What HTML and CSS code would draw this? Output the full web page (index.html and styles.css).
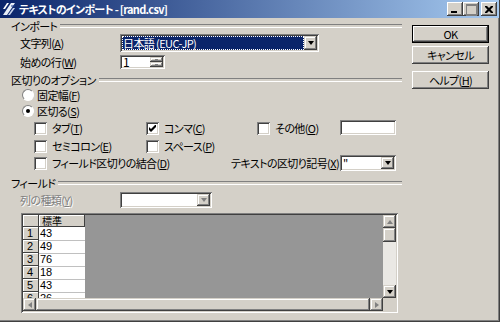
FILE: index.html
```html
<!DOCTYPE html>
<html lang="ja">
<head>
  <meta charset="UTF-8">
  <title>テキストのインポート</title>
  <link rel="stylesheet" href="styles.css">
</head>
<body>
<div class="window">
  <div class="titlebar">
    <svg class="app-icon" width="14" height="14" viewBox="0 0 14 14">
      <path d="M1 13 L9 1 L13 1 L5 13 Z" fill="#e8eef8"/>
      <path d="M1 7 L5 1 L7 1 L3 7 Z" fill="#ffffff"/>
      <path d="M6 13 L11 6 L13 6 L8 13 Z" fill="#c8d4ec"/>
      <path d="M9 4 L13 4" stroke="#1c3c8c" stroke-width="1"/>
    </svg>
    <span class="title">テキストのインポート - [rand.csv]</span>
    <div class="caption-buttons">
      <span class="cap-btn cap-min"></span>
      <span class="cap-btn cap-max"></span>
      <span class="cap-btn cap-close">
        <svg width="8" height="7" viewBox="0 0 8 7"><path d="M0 0h2l2 2 2-2h2v1l-2.5 2.5L8 6v1H6L4 5 2 7H0V6l2.5-2.5L0 1z" fill="#000"/></svg>
      </span>
    </div>
  </div>

  <div class="content">
    <div class="main">
      <div class="group-title"><span>インポート</span></div>

      <div class="row row-charset">
        <span class="field-label">文字列(<u>A</u>)</span>
        <div class="combo combo-charset sunken">
          <span class="combo-value selected">日本語 (EUC-JP)</span>
          <span class="drop-btn raised"><i class="arrow-down"></i></span>
        </div>
      </div>

      <div class="row row-start">
        <span class="field-label">始めの行(<u>W</u>)</span>
        <div class="spin sunken">
          <span class="spin-value">1</span>
          <span class="spin-btns">
            <span class="spin-btn raised"><i class="mini-up"></i></span>
            <span class="spin-btn raised"><i class="mini-down"></i></span>
          </span>
        </div>
      </div>

      <div class="group-title group-options"><span>区切りのオプション</span></div>

      <div class="radio-row radio-first">
        <span class="radio"></span>
        <span>固定幅(<u>F</u>)</span>
      </div>
      <div class="radio-row">
        <span class="radio checked"></span>
        <span>区切る(<u>S</u>)</span>
      </div>

      <div class="check-grid check-row-1">
        <div class="check-item"><span class="checkbox"></span>タブ(<u>T</u>)</div>
        <div class="check-item"><span class="checkbox checked">
          <svg width="7" height="7" viewBox="0 0 7 7"><path d="M0 2v3l2 2 5-5V-1L2 4z" fill="#000"/></svg>
        </span>コンマ(<u>C</u>)</div>
        <div class="check-item"><span class="checkbox"></span>その他(<u>O</u>)</div>
        <div class="textbox sunken"></div>
      </div>

      <div class="check-grid check-row-2">
        <div class="check-item"><span class="checkbox"></span>セミコロン(<u>E</u>)</div>
        <div class="check-item"><span class="checkbox"></span>スペース(<u>P</u>)</div>
      </div>

      <div class="check-row-3">
        <div class="check-item"><span class="checkbox"></span>フィールド区切りの結合(<u>D</u>)</div>
        <span class="quote-label">テキストの区切り記号(<u>X</u>)</span>
        <div class="combo combo-quote sunken">
          <span class="combo-value">"</span>
          <span class="drop-btn raised"><i class="arrow-down"></i></span>
        </div>
      </div>

      <div class="group-title group-fields"><span>フィールド</span></div>

      <div class="row row-coltype">
        <span class="field-label disabled">列の種類(<u>Y</u>)</span>
        <div class="combo combo-type sunken">
          <span class="combo-value"></span>
          <span class="drop-btn raised"><i class="arrow-down gray"></i></span>
        </div>
      </div>

      <div class="grid-box sunken">
        <div class="grid-area">
          <table class="data-grid">
            <tr><th class="corner"></th><th class="col-head">標準</th></tr>
            <tr><th class="row-head">1</th><td>43</td></tr>
            <tr><th class="row-head">2</th><td>49</td></tr>
            <tr><th class="row-head">3</th><td>76</td></tr>
            <tr><th class="row-head">4</th><td>18</td></tr>
            <tr><th class="row-head">5</th><td>43</td></tr>
            <tr><th class="row-head">6</th><td>26</td></tr>
          </table>
        </div>
        <div class="vscroll">
          <span class="sb-btn raised"><i class="arrow-up gray"></i></span>
          <span class="sb-thumb raised"></span>
          <span class="sb-track"></span>
          <span class="sb-btn raised"><i class="arrow-down"></i></span>
        </div>
        <div class="hscroll">
          <span class="sb-btn raised"><i class="arrow-left gray"></i></span>
          <span class="sb-thumb-h raised"></span>
          <span class="sb-btn raised"><i class="arrow-right gray"></i></span>
        </div>
        <div class="sb-corner"></div>
      </div>
    </div>

    <div class="side">
      <button class="btn btn-default">OK</button>
      <button class="btn">キャンセル</button>
      <button class="btn btn-help">ヘルプ(<u>H</u>)</button>
    </div>
  </div>
</div>
</body>
</html>
```

FILE: styles.css
```css
* {
  box-sizing: border-box;
}

body {
  margin: 0;
  background: #d4d0c8;
  font-family: "Noto Sans CJK JP", "Liberation Sans", sans-serif;
  font-size: 11px;
  letter-spacing: -0.6px;
  font-feature-settings: "palt";
  color: #000;
}

u {
  text-decoration: underline;
  text-underline-offset: 1px;
}

.window {
  width: 500px;
  height: 322px;
  background: #d4d0c8;
  border-right: 1px solid #404040;
  border-bottom: 1px solid #404040;
  box-shadow: inset -1px -1px #808080;
}

/* 3D borders, Windows 2000 style */
.raised {
  background: #d4d0c8;
  box-shadow: inset -1px -1px #404040, inset 1px 1px #d4d0c8,
              inset -2px -2px #808080, inset 2px 2px #fff;
}

.sunken {
  background: #fff;
  box-shadow: inset 1px 1px #808080, inset -1px -1px #fff,
              inset 2px 2px #404040, inset -2px -2px #d4d0c8;
}

/* title bar */
.titlebar {
  height: 18px;
  display: flex;
  align-items: center;
  background: linear-gradient(to right, #0a246a, #a6caf0);
  color: #fff;
  padding-left: 2px;
}

.app-icon {
  flex: none;
  margin-right: 3px;
}

.title {
  font-weight: bold;
  font-size: 11px;
  letter-spacing: -0.7px;
}

.caption-buttons {
  margin-left: auto;
  display: flex;
  margin-right: 2px;
}

.cap-btn {
  width: 16px;
  height: 14px;
  display: flex;
  align-items: center;
  justify-content: center;
  position: relative;
  background: #d4d0c8;
  box-shadow: inset -1px -1px #404040, inset 1px 1px #fff,
              inset -2px -2px #808080;
}

.cap-close {
  margin-left: 2px;
}

.cap-min::after {
  content: "";
  position: absolute;
  left: 4px;
  top: 9px;
  width: 6px;
  height: 2px;
  background: #000;
}

.cap-max::after {
  content: "";
  position: absolute;
  left: 3px;
  top: 2px;
  width: 9px;
  height: 9px;
  border: 1px solid #808080;
  border-top-width: 2px;
}

/* content */
.content {
  display: flex;
}

.main {
  width: 402px;
  padding-left: 11px;
}

.group-title {
  height: 16px;
  display: flex;
  align-items: center;
  line-height: 14px;
}

.group-title::after {
  content: "";
  flex: 1;
  height: 2px;
  margin-left: 3px;
  border-top: 1px solid #808080;
  border-bottom: 1px solid #fff;
}

.group-options {
  margin-top: 3px;
}

.group-fields {
  margin-top: 4px;
}

.row {
  display: flex;
  align-items: center;
  padding-left: 9px;
}

.field-label {
  width: 100px;
  line-height: 14px;
}

.field-label.disabled {
  color: #808080;
  text-shadow: 1px 1px #fff;
}

.row-charset {
  height: 18px;
}

.row-start {
  margin-top: 3px;
  height: 14px;
}

.combo {
  height: 18px;
  display: flex;
  align-items: center;
  padding: 2px;
}

.combo-charset {
  width: 199px;
}

.combo-value {
  flex: 1;
  height: 100%;
  line-height: 14px;
  padding-left: 1px;
  white-space: nowrap;
}

.combo-value.selected {
  background: #0a246a;
  color: #fff;
  outline: 1px dotted #fff;
  outline-offset: -1px;
}

.drop-btn {
  width: 13px;
  height: 100%;
  display: flex;
  align-items: center;
  justify-content: center;
  flex: none;
}

.arrow-down,
.arrow-up,
.arrow-left,
.arrow-right {
  width: 0;
  height: 0;
  display: block;
}

.arrow-down {
  border-left: 3.5px solid transparent;
  border-right: 3.5px solid transparent;
  border-top: 4px solid #000;
}

.arrow-up {
  border-left: 3.5px solid transparent;
  border-right: 3.5px solid transparent;
  border-bottom: 4px solid #000;
}

.arrow-left {
  border-top: 3.5px solid transparent;
  border-bottom: 3.5px solid transparent;
  border-right: 4px solid #000;
}

.arrow-right {
  border-top: 3.5px solid transparent;
  border-bottom: 3.5px solid transparent;
  border-left: 4px solid #000;
}

.arrow-down.gray { border-top-color: #808080; }
.arrow-up.gray { border-bottom-color: #808080; }
.arrow-left.gray { border-right-color: #808080; }
.arrow-right.gray { border-left-color: #808080; }

.spin {
  width: 45px;
  height: 14px;
  display: flex;
  padding: 2px;
}

.spin-value {
  flex: 1;
  line-height: 10px;
  font-size: 12px;
  padding-left: 1px;
}

.spin-btns {
  width: 13px;
  display: flex;
  flex-direction: column;
}

.spin-btn {
  flex: 1;
  display: flex;
  align-items: center;
  justify-content: center;
}

.mini-up,
.mini-down {
  width: 3px;
  height: 1px;
  background: #808080;
  display: block;
}

.radio-row {
  display: flex;
  align-items: center;
  gap: 3px;
  height: 16px;
  padding-left: 11px;
  line-height: 14px;
}

.radio-first {
  margin-top: -1px;
}

.radio {
  width: 12px;
  height: 12px;
  border-radius: 50%;
  background: #fff;
  border: 1px solid;
  border-color: #808080 #fff #fff #808080;
  position: relative;
}

.radio.checked::after {
  content: "";
  position: absolute;
  left: 3px;
  top: 3px;
  width: 4px;
  height: 4px;
  border-radius: 50%;
  background: #000;
}

.check-grid {
  display: grid;
  grid-template-columns: 112px 111px 83px 56px;
  padding-left: 23px;
  height: 14px;
  align-items: center;
}

.check-row-1 {
  margin-top: 2px;
}

.check-row-2 {
  margin-top: 4px;
}

.check-item {
  display: flex;
  align-items: center;
  white-space: nowrap;
  line-height: 14px;
}

.checkbox {
  width: 13px;
  height: 13px;
  flex: none;
  margin-right: 5px;
  background: #fff;
  display: flex;
  align-items: center;
  justify-content: center;
  box-shadow: inset 1px 1px #808080, inset -1px -1px #fff,
              inset 2px 2px #404040, inset -2px -2px #d4d0c8;
}

.textbox {
  height: 15px;
  margin-top: -1px;
}

.check-row-3 {
  display: flex;
  align-items: center;
  padding-left: 23px;
  height: 16px;
  margin-top: 2px;
}

.quote-label {
  margin-left: auto;
  margin-right: 1px;
  white-space: nowrap;
}

.combo-quote {
  width: 56px;
  height: 16px;
  margin-right: 6px;
}

.combo-type {
  width: 92px;
  height: 16px;
}

.row-coltype {
  margin-top: 1px;
  height: 16px;
}

/* data grid */
.grid-box {
  width: 377px;
  height: 100px;
  margin-top: 5px;
  margin-left: 10px;
  padding: 2px;
  background: #d4d0c8;
  display: grid;
  grid-template-columns: 1fr 13px;
  grid-template-rows: 1fr 13px;
}

.grid-area {
  background: #969696;
  overflow: hidden;
}

.data-grid {
  border-collapse: collapse;
  font-family: "Liberation Sans", "Noto Sans CJK JP", sans-serif;
  font-size: 11px;
  line-height: 11px;
  letter-spacing: 0;
}

.data-grid th,
.data-grid td {
  padding: 0;
  height: 13px;
  text-align: left;
  font-weight: normal;
  white-space: nowrap;
  vertical-align: middle;
}

.data-grid th {
  background: #d4d0c8;
  box-shadow: inset -1px -1px #404040, inset 1px 1px #fff;
}

.data-grid .corner {
  width: 16px;
  height: 12px;
}

.data-grid .col-head {
  width: 46px;
  height: 12px;
  padding-left: 3px;
  font-family: "Noto Sans CJK JP", sans-serif;
  font-size: 10px;
  line-height: 10px;
}

.data-grid .row-head {
  padding-left: 4px;
}

.data-grid td {
  background: #fff;
  padding-left: 1px;
  border-bottom: 1px solid #c0c0c0;
}

.vscroll {
  display: flex;
  flex-direction: column;
}

.sb-btn {
  width: 13px;
  height: 13px;
  flex: none;
  display: flex;
  align-items: center;
  justify-content: center;
}

.sb-thumb {
  height: 14px;
  flex: none;
}

.sb-track {
  flex: 1;
  background: #eae8e4;
}

.hscroll {
  display: flex;
}

.sb-thumb-h {
  flex: 1;
}

.sb-corner {
  background: #d4d0c8;
}

/* buttons on the right */
.side {
  display: flex;
  flex-direction: column;
  padding-top: 7px;
  margin-left: 10px;
}

.btn {
  width: 77px;
  height: 18px;
  margin-bottom: 3px;
  padding: 0;
  border: none;
  font-family: inherit;
  font-size: 11px;
  letter-spacing: -0.6px;
  font-feature-settings: "palt";
  line-height: 16px;
  color: #000;
  background: #d4d0c8;
  box-shadow: inset -1px -1px #404040, inset 1px 1px #fff,
              inset -2px -2px #808080;
}

.btn-default {
  box-shadow: inset 0 0 0 1px #000, inset -2px -2px #404040,
              inset 2px 2px #fff, inset -3px -3px #808080;
}

.btn-help {
  margin-top: 4px;
}
```
